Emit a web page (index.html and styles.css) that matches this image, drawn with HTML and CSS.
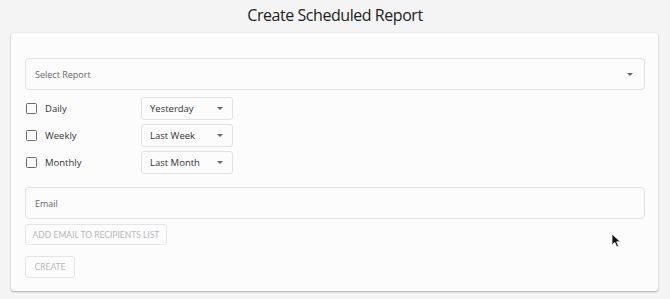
FILE: index.html
```html
<!DOCTYPE html>
<html>
<head>
<meta charset="utf-8">
<link rel="stylesheet" href="styles.css">
</head>
<body>
<h1 class="title">Create Scheduled Report</h1>
<div class="card">
  <div class="field select-field">
    <span class="placeholder">Select Report</span>
    <span class="caret"></span>
  </div>
  <div class="periods">
    <div class="period-row">
      <label class="check"><span class="box"></span><span class="check-label">Daily</span></label>
      <div class="dropdown"><span>Yesterday</span><span class="caret"></span></div>
    </div>
    <div class="period-row">
      <label class="check"><span class="box"></span><span class="check-label">Weekly</span></label>
      <div class="dropdown"><span>Last Week</span><span class="caret"></span></div>
    </div>
    <div class="period-row">
      <label class="check"><span class="box"></span><span class="check-label">Monthly</span></label>
      <div class="dropdown"><span>Last Month</span><span class="caret"></span></div>
    </div>
  </div>
  <div class="field email-field">
    <span class="placeholder">Email</span>
  </div>
  <button class="btn btn-add">ADD EMAIL TO RECIPIENTS LIST</button>
  <button class="btn btn-create">CREATE</button>
</div>
<svg class="cursor" width="12" height="16" viewBox="0 0 12 16">
  <path d="M1 1 L1 12 L3.8 9.4 L5.8 14 L7.6 13.2 L5.7 8.8 L9.4 8.8 Z" fill="#111" stroke="#fff" stroke-width="0.8"/>
</svg>
</body>
</html>
```
FILE: styles.css
```css
html, body {
  margin: 0;
  padding: 0;
}
body {
  background: #f4f4f4;
  font-family: "Open Sans", "Noto Sans", sans-serif;
  width: 670px;
  height: 299px;
  overflow: hidden;
  position: relative;
}
.title {
  margin: 0;
  height: 33px;
  line-height: 30px;
  text-align: center;
  font-size: 16px;
  font-weight: 400;
  color: #222;
  letter-spacing: -0.45px;
}
.card {
  margin-left: 11px;
  width: 647px;
  box-sizing: border-box;
  padding: 25px 13px 13px 14px;
  background: #fdfcfd;
  border-radius: 3px;
  box-shadow: 0 1px 2px rgba(0,0,0,0.3), 0 0 1px rgba(0,0,0,0.08);
}
.field {
  height: 32px;
  box-sizing: border-box;
  border: 1px solid #e2e2e2;
  border-radius: 4px;
  padding: 0 9px;
  display: flex;
  align-items: center;
  justify-content: space-between;
  font-size: 9px;
  color: #666;
}
.caret {
  width: 0;
  height: 0;
  border-left: 3px solid transparent;
  border-right: 3px solid transparent;
  border-top: 3.5px solid #666;
}
.select-field .caret {
  margin-right: 2px;
}
.periods {
  margin-top: 7px;
  display: flex;
  flex-direction: column;
  gap: 4px;
}
.period-row {
  display: flex;
  align-items: center;
}
.check {
  width: 116px;
  display: flex;
  align-items: center;
  gap: 8px;
  padding-left: 1px;
  box-sizing: border-box;
}
.box {
  width: 11px;
  height: 11px;
  box-sizing: border-box;
  border: 1.5px solid #6a6a6a;
  border-radius: 1.5px;
}
.check-label {
  font-size: 9.5px;
  color: #333;
}
.dropdown {
  width: 92px;
  height: 23px;
  box-sizing: border-box;
  border: 1px solid #e2e2e2;
  border-radius: 3px;
  padding: 0 9px 0 8px;
  display: flex;
  align-items: center;
  justify-content: space-between;
  font-size: 9.5px;
  color: #333;
}
.email-field {
  margin-top: 13px;
}
.btn {
  display: block;
  font-family: "Lato", "Open Sans", sans-serif;
  font-size: 8.5px;
  color: #b8b8b8;
  background: transparent;
  border: 1px solid #e6e6e6;
  border-radius: 3px;
  padding: 0;
  box-sizing: border-box;
}
.btn-add {
  margin-top: 5px;
  width: 142px;
  height: 21px;
}
.btn-create {
  margin-top: 11px;
  width: 50px;
  height: 22px;
}
.cursor {
  position: absolute;
  left: 611px;
  top: 233px;
}
```
